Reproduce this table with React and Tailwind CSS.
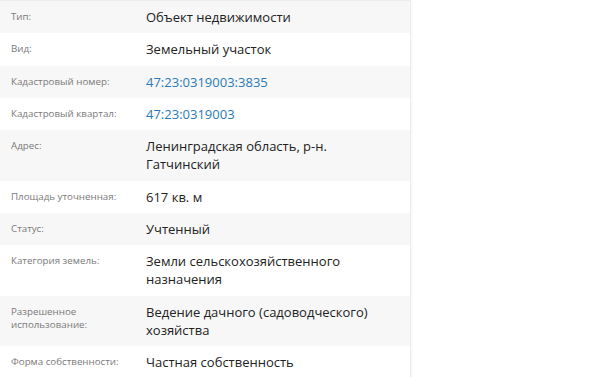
import React from 'react';

const rows = [
  { label: 'Тип:', value: 'Объект недвижимости' },
  { label: 'Вид:', value: 'Земельный участок' },
  { label: 'Кадастровый номер:', value: '47:23:0319003:3835', link: true },
  { label: 'Кадастровый квартал:', value: '47:23:0319003', link: true },
  { label: 'Адрес:', value: 'Ленинградская область, р-н. Гатчинский' },
  { label: 'Площадь уточненная:', value: '617 кв. м' },
  { label: 'Статус:', value: 'Учтенный' },
  { label: 'Категория земель:', value: 'Земли сельскохозяйственного назначения' },
  { label: 'Разрешенное использование:', value: 'Ведение дачного (садоводческого) хозяйства' },
  { label: 'Форма собственности:', value: 'Частная собственность' },
];

export default function App() {
  return (
    <div
      className="min-h-screen bg-white"
      style={{ fontFamily: '"Open Sans", "Noto Sans", sans-serif' }}
    >
      <div className="w-[411px] border-t border-r border-[#ececec] shadow-[1px_0_2px_rgba(0,0,0,0.04)]">
        {rows.map((row, i) => (
          <div
            key={row.label}
            className={`flex ${i % 2 === 0 ? 'bg-[#f7f7f7]' : 'bg-white'}`}
          >
            <div className="w-[135px] shrink-0 pl-[11px] pr-2 pt-[9px] pb-2 text-[9.75px] leading-[13px] text-[#7a7a7a]">
              {row.label}
            </div>
            <div className="w-[250px] py-[7px] pl-[11px] text-[13px] leading-[18.25px]">
              {row.link ? (
                <a href="#" className="text-[#2a7ab8]">
                  {row.value}
                </a>
              ) : (
                <span className="text-[#222]">{row.value}</span>
              )}
            </div>
          </div>
        ))}
      </div>
    </div>
  );
}
